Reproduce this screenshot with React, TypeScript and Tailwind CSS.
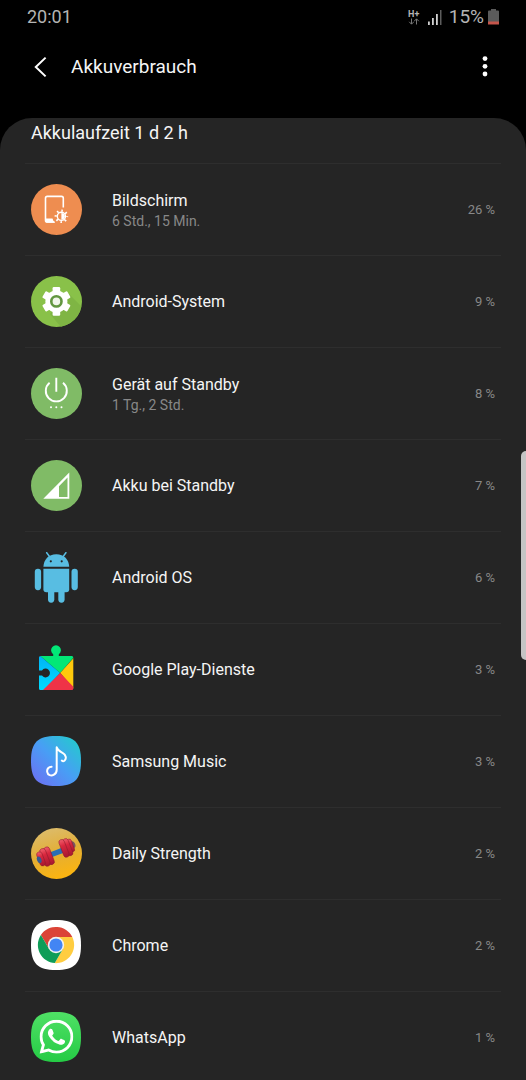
import type { ReactNode } from "react";
import { SiWhatsapp } from "react-icons/si";

const SQUIRCLE =
  "M25 0C43.5 0 50 6.5 50 25C50 43.5 43.5 50 25 50C6.5 50 0 43.5 0 25C0 6.5 6.5 0 25 0Z";

function Icon({ children }: { children: ReactNode }) {
  return (
    <svg viewBox="0 0 51 51" className="size-[51px] shrink-0" aria-hidden="true">
      {children}
    </svg>
  );
}

function ScreenIcon() {
  return (
    <Icon>
      <circle cx="25.5" cy="25.5" r="25.5" fill="#ee8d50" />
      <path
        d="M32.3 23.5V14.2Q32.3 12.4 30.5 12.4H16.3Q14.5 12.4 14.5 14.2V36.2Q14.5 38 16.3 38H23.5"
        fill="none"
        stroke="#fff"
        strokeWidth="1.6"
      />
      <path d="M14.5 34.5H21.5Q22 37 24.2 38.7H16Q14.5 38.7 14.5 37Z" fill="#fff" />
      <circle cx="30.4" cy="32.3" r="4.1" fill="none" stroke="#fff" strokeWidth="1.4" />
      <path d="M30.4 28.9A3.4 3.4 0 0 1 30.4 35.7Z" fill="#fff" />
      <circle
        cx="30.4"
        cy="32.3"
        r="5.6"
        fill="none"
        stroke="#fff"
        strokeWidth="2.4"
        strokeDasharray="1.5 2.898"
        strokeDashoffset="0.75"
      />
    </Icon>
  );
}

function SystemIcon() {
  return (
    <Icon>
      <clipPath id="system-disc">
        <circle cx="25.5" cy="25.5" r="25.5" />
      </clipPath>
      <circle cx="25.5" cy="25.5" r="25.5" fill="#89c149" />
      <path d="M37 17L51 31V51H30L19 38Z" fill="#7fb544" clipPath="url(#system-disc)" />
      <g fill="#fff">
        <circle cx="25.4" cy="25.4" r="11" />
        <rect x="21.6" y="11" width="7.6" height="28.8" rx="1.2" />
        <rect x="21.6" y="11" width="7.6" height="28.8" rx="1.2" transform="rotate(60 25.4 25.4)" />
        <rect x="21.6" y="11" width="7.6" height="28.8" rx="1.2" transform="rotate(120 25.4 25.4)" />
      </g>
      <circle cx="25.4" cy="25.4" r="5.1" fill="#f1f6ea" stroke="#629640" strokeWidth="2.6" />
    </Icon>
  );
}

function StandbyIcon() {
  return (
    <Icon>
      <circle cx="25.5" cy="25.5" r="25.5" fill="#80bb66" />
      <path
        d="M18.6 14.8A10.5 10.5 0 1 0 32 14.8M25.3 9.8V23.8"
        fill="none"
        stroke="#fff"
        strokeWidth="1.9"
      />
      <circle cx="20" cy="39.3" r="1" fill="#fff" />
      <circle cx="25.3" cy="39.3" r="1" fill="#fff" />
      <circle cx="30.5" cy="39.3" r="1" fill="#fff" />
    </Icon>
  );
}

function SignalIcon() {
  return (
    <Icon>
      <circle cx="25.5" cy="25.5" r="25.5" fill="#80bb66" />
      <path
        d="M12.3 38.7L38.3 12.5V38.7ZM28 26.2V36.9H36.5V17.4Z"
        fill="#fff"
        fillRule="evenodd"
      />
    </Icon>
  );
}

function AndroidIcon() {
  return (
    <Icon>
      <g fill="#58bde2">
        <path d="M12.4 14.8C12.7 7.6 17.5 2.2 25.3 2.2S37.9 7.6 38.2 14.8Z" />
        <path d="M15.7 0.7L19 5.2M34.9 0.7L31.6 5.2" stroke="#58bde2" strokeWidth="1.5" strokeLinecap="round" />
        <path d="M12.4 16.7H38.2V37.3Q38.2 40.3 35.2 40.3H15.4Q12.4 40.3 12.4 37.3Z" />
        <rect x="3.8" y="16.7" width="6.3" height="21.5" rx="3.1" />
        <rect x="40.5" y="16.7" width="6.3" height="21.5" rx="3.1" />
        <rect x="17" y="36" width="6.3" height="14.7" rx="3.1" />
        <rect x="27.3" y="36" width="6.3" height="14.7" rx="3.1" />
      </g>
      <circle cx="19.8" cy="9.3" r="1.1" fill="#252525" />
      <circle cx="30.7" cy="9.3" r="1.1" fill="#252525" />
    </Icon>
  );
}

function PlayServicesIcon() {
  return (
    <Icon>
      <linearGradient id="play-blue" x1="0" y1="0" x2="0" y2="1">
        <stop offset="0" stopColor="#00b2f5" />
        <stop offset="1" stopColor="#00dcff" />
      </linearGradient>
      <clipPath id="play-piece">
        <path d="M9.5 12H22.2V10.2A4.9 4.9 0 1 1 27.8 10.2V12H40.8Q42.3 12 42.3 13.5V44.5Q42.3 46 40.8 46H9.5Q8 46 8 44.5V31.6H11A4.4 4.4 0 1 0 11 26.4H8V13.5Q8 12 9.5 12Z" />
      </clipPath>
      <g clipPath="url(#play-piece)">
        <path d="M8 0H43V13L29.2 29L8 11Z" fill="#02e777" />
        <path d="M8 11L29.2 29L13 46H8Z" fill="url(#play-blue)" />
        <path d="M29.2 29L43 13.5V45Z" fill="#ffc90c" />
        <path d="M29.2 29L43 43.5V46H12Z" fill="#ef3347" />
      </g>
    </Icon>
  );
}

function MusicIcon() {
  return (
    <Icon>
      <linearGradient id="music-bg" x1="0" y1="1" x2="1" y2="0">
        <stop offset="0" stopColor="#716bf2" />
        <stop offset="0.5" stopColor="#489ef5" />
        <stop offset="1" stopColor="#1fd0c8" />
      </linearGradient>
      <path d={SQUIRCLE} fill="url(#music-bg)" />
      <path
        d="M20.6 30.7C17.6 30.9 15.8 33 16.2 35.8C16.7 39.2 20.2 40.1 22.6 38.9C24.6 37.9 25.7 36.2 25.7 33.7V11.2C26.5 14.3 28.8 15.3 31.2 16.6C35.2 18.8 35.8 22.6 33.4 24.7C32.6 25.3 31.6 25.3 30.8 24.6"
        fill="none"
        stroke="#fff"
        strokeWidth="2"
        strokeLinecap="round"
        strokeLinejoin="round"
      />
    </Icon>
  );
}

function DumbbellIcon() {
  return (
    <Icon>
      <linearGradient id="dumbbell-bg" x1="0.3" y1="0" x2="0.6" y2="1">
        <stop offset="0" stopColor="#dcbc6c" />
        <stop offset="0.5" stopColor="#e3ae35" />
        <stop offset="1" stopColor="#fdb50e" />
      </linearGradient>
      <linearGradient id="plate" x1="0" y1="0" x2="0" y2="1">
        <stop offset="0" stopColor="#f0606c" />
        <stop offset="0.35" stopColor="#d9283f" />
        <stop offset="1" stopColor="#a5182f" />
      </linearGradient>
      <circle cx="25.5" cy="25.5" r="25.5" fill="url(#dumbbell-bg)" />
      <g transform="rotate(-21 25.5 24)">
        <ellipse cx="43.2" cy="23" rx="2.6" ry="3.6" fill="#7a5560" />
        <rect x="18" y="22" width="15" height="5.2" rx="1" fill="#2b6fb5" />
        <g fill="url(#plate)" stroke="#8a1a2c" strokeWidth="0.5">
          <rect x="39" y="16.4" width="4.4" height="13.4" rx="2.2" />
          <rect x="35.2" y="14.6" width="5.4" height="18" rx="2.7" />
          <rect x="31" y="14" width="5.6" height="18.6" rx="2.8" />
          <rect x="14.4" y="15.6" width="5.8" height="18.6" rx="2.9" />
          <rect x="9.8" y="15.6" width="6" height="18.6" rx="3" />
          <rect x="5.8" y="17.6" width="5.6" height="14.6" rx="2.8" />
        </g>
        <ellipse cx="6.6" cy="25" rx="2.2" ry="3.4" fill="#355b92" />
      </g>
    </Icon>
  );
}

function ChromeIcon() {
  return (
    <Icon>
      <path d={SQUIRCLE} fill="#fff" />
      <path d="M9.9 14.9A18.2 18.2 0 0 1 41.3 17H25L18.1 29Z" fill="#db4437" />
      <path d="M41.3 17A18.2 18.2 0 0 1 23.8 43.1L31.9 29L25 17Z" fill="#ffcd40" />
      <path d="M23.8 43.1A18.2 18.2 0 0 1 9.9 14.9L18.1 29H31.9Z" fill="#0f9d58" />
      <circle cx="25" cy="25" r="8.2" fill="#f1f1f1" />
      <circle cx="25" cy="25" r="6.6" fill="#4285f4" />
    </Icon>
  );
}

function WhatsAppIcon() {
  return (
    <Icon>
      <linearGradient id="whatsapp-bg" x1="0" y1="0" x2="0" y2="1">
        <stop offset="0" stopColor="#4fe065" />
        <stop offset="1" stopColor="#25cb45" />
      </linearGradient>
      <path d={SQUIRCLE} fill="url(#whatsapp-bg)" />
      <SiWhatsapp x={8.4} y={7.8} size={34} color="#fff" />
    </Icon>
  );
}

type Consumer = { name: string; detail?: string; percent: number; icon: ReactNode };

const consumers: Consumer[] = [
  { name: "Bildschirm", detail: "6 Std., 15 Min.", percent: 26, icon: <ScreenIcon /> },
  { name: "Android-System", percent: 9, icon: <SystemIcon /> },
  { name: "Gerät auf Standby", detail: "1 Tg., 2 Std.", percent: 8, icon: <StandbyIcon /> },
  { name: "Akku bei Standby", percent: 7, icon: <SignalIcon /> },
  { name: "Android OS", percent: 6, icon: <AndroidIcon /> },
  { name: "Google Play-Dienste", percent: 3, icon: <PlayServicesIcon /> },
  { name: "Samsung Music", percent: 3, icon: <MusicIcon /> },
  { name: "Daily Strength", percent: 2, icon: <DumbbellIcon /> },
  { name: "Chrome", percent: 2, icon: <ChromeIcon /> },
  { name: "WhatsApp", percent: 1, icon: <WhatsAppIcon /> },
];

function StatusBar() {
  return (
    <div className="flex h-[34px] items-center justify-between px-[27px] text-[19px] leading-6 text-[#b4b4b4]">
      <span className="text-[18px]">20:01</span>
      <div className="flex items-center">
        <div className="mr-2 flex w-3 flex-col items-center">
          <span className="text-[9px] leading-[8px] font-bold">H+</span>
          <svg viewBox="0 0 12 7" className="h-[7px] w-3" fill="none" stroke="#777" aria-hidden="true">
            <path d="M3.5 0.5V6M1.2 3.8L3.5 6.2L5.8 3.8M8.5 6.5V1M6.2 3.2L8.5 0.8L10.8 3.2" />
          </svg>
        </div>
        <svg viewBox="0 0 14 15" className="mr-[7px] h-[15px] w-3.5" aria-hidden="true">
          <path d="M0 11.5H1.8V15H0ZM4 8H5.8V15H4ZM8 4H9.8V15H8Z" fill="#d0d0d0" />
          <path d="M12 0H13.5V15H12Z" fill="#5c5c5c" />
        </svg>
        <span className="mr-1">15%</span>
        <svg viewBox="0 0 11 16" className="h-4 w-[11px]" aria-hidden="true">
          <path d="M3 0H8V1.6H10Q11 1.6 11 2.6V13H0V2.6Q0 1.6 1 1.6H3Z" fill="#5b5b5b" />
          <path d="M0 12.5H11V15.5H0Z" fill="#c4554b" />
        </svg>
      </div>
    </div>
  );
}

export default function App() {
  return (
    <div className="relative flex min-h-screen flex-col bg-black font-['Roboto',sans-serif] text-[#f5f5f5]">
      <StatusBar />
      <header className="mb-[18px] flex h-[66px] items-center px-[29px]">
        <button type="button" aria-label="Zurück" className="flex size-6 items-center justify-center">
          <svg viewBox="0 0 24 24" className="size-6" fill="none" stroke="#fff" strokeWidth="2">
            <path d="M16.6 2.6L6.8 12L16.6 21.4" />
          </svg>
        </button>
        <h1 className="ml-[18px] grow text-[19px] leading-6">Akkuverbrauch</h1>
        <button type="button" aria-label="Weitere Optionen" className="flex size-6 items-center justify-center">
          <svg viewBox="0 0 24 24" className="size-6" fill="#fff">
            <circle cx="12" cy="3.6" r="2.4" />
            <circle cx="12" cy="11.3" r="2.4" />
            <circle cx="12" cy="19" r="2.4" />
          </svg>
        </button>
      </header>
      <main className="grow rounded-t-[32px] bg-[#252525] px-[25px] pt-[3px]">
        <h2 className="mb-[18px] px-1.5 text-[18px] leading-6">Akkulaufzeit 1 d 2 h</h2>
        <ul>
          {consumers.map((c) => (
            <li
              key={c.name}
              className="flex items-center border-t border-[#2e2e2e] px-1.5 py-5 last:pb-0"
            >
              {c.icon}
              <div className="ml-[30px] grow">
                <p className="text-base leading-[22px]">{c.name}</p>
                {c.detail && <p className="text-[14px] leading-[18px] text-[#888]">{c.detail}</p>}
              </div>
              <span className="text-[13px] leading-5 text-[#888]">{c.percent} %</span>
            </li>
          ))}
        </ul>
      </main>
      <div className="absolute top-[451px] right-0 h-[209px] w-[5px] rounded-l-md bg-[#c4c4c4]" />
    </div>
  );
}
